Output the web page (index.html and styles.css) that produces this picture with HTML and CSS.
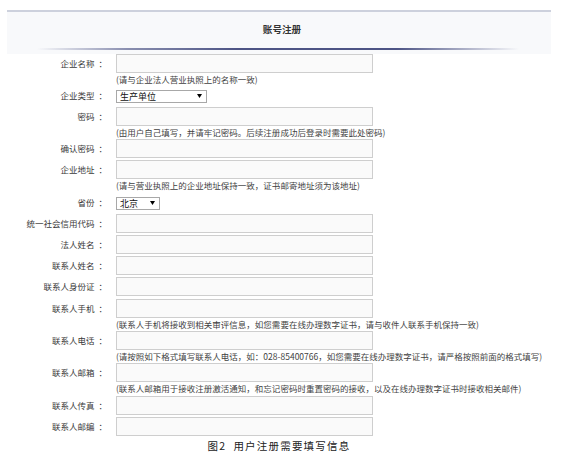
FILE: index.html
```html
<!DOCTYPE html>
<html lang="zh-CN">
<head>
  <meta charset="UTF-8">
  <meta name="viewport" content="width=device-width, initial-scale=1.0">
  <title>账号注册</title>
  <link rel="stylesheet" href="styles.css">
</head>
<body>

  <div class="header">
    <div class="header-title">账号注册</div>
    <div class="header-line"></div>
    <div class="header-foot"></div>
  </div>

  <div class="form">
    <div class="row">
      <div class="label">企业名称<span class="colon">：</span></div>
      <div class="field">
        <div class="input"></div>
        <div class="hint">(请与企业法人营业执照上的名称一致)</div>
      </div>
    </div>
    <div class="row">
      <div class="label">企业类型<span class="colon">：</span></div>
      <div class="field">
        <div class="select wide">
          <span>生产单位</span>
          <svg class="arrow" width="5" height="4" viewBox="0 0 5 4"><path d="M0 0h5L2.5 4z" fill="#000"/></svg>
        </div>
      </div>
    </div>
    <div class="row">
      <div class="label">密码<span class="colon">：</span></div>
      <div class="field">
        <div class="input"></div>
        <div class="hint">(由用户自己填写，并请牢记密码。后续注册成功后登录时需要此处密码)</div>
      </div>
    </div>
    <div class="row">
      <div class="label">确认密码<span class="colon">：</span></div>
      <div class="field"><div class="input"></div></div>
    </div>
    <div class="row">
      <div class="label">企业地址<span class="colon">：</span></div>
      <div class="field">
        <div class="input"></div>
        <div class="hint">(请与营业执照上的企业地址保持一致，证书邮寄地址须为该地址)</div>
      </div>
    </div>
    <div class="row">
      <div class="label">省份<span class="colon">：</span></div>
      <div class="field">
        <div class="select narrow">
          <span>北京</span>
          <svg class="arrow" width="5" height="4" viewBox="0 0 5 4"><path d="M0 0h5L2.5 4z" fill="#000"/></svg>
        </div>
      </div>
    </div>
    <div class="row">
      <div class="label">统一社会信用代码<span class="colon">：</span></div>
      <div class="field"><div class="input"></div></div>
    </div>
    <div class="row">
      <div class="label">法人姓名<span class="colon">：</span></div>
      <div class="field"><div class="input"></div></div>
    </div>
    <div class="row">
      <div class="label">联系人姓名<span class="colon">：</span></div>
      <div class="field"><div class="input"></div></div>
    </div>
    <div class="row">
      <div class="label">联系人身份证<span class="colon">：</span></div>
      <div class="field"><div class="input"></div></div>
    </div>
    <div class="row">
      <div class="label">联系人手机<span class="colon">：</span></div>
      <div class="field">
        <div class="input"></div>
        <div class="hint">(联系人手机将接收到相关审评信息，如您需要在线办理数字证书，请与收件人联系手机保持一致)</div>
      </div>
    </div>
    <div class="row">
      <div class="label">联系人电话<span class="colon">：</span></div>
      <div class="field">
        <div class="input"></div>
        <div class="hint">(请按照如下格式填写联系人电话，如：028-85400766，如您需要在线办理数字证书，请严格按照前面的格式填写)</div>
      </div>
    </div>
    <div class="row">
      <div class="label">联系人邮箱<span class="colon">：</span></div>
      <div class="field">
        <div class="input"></div>
        <div class="hint">(联系人邮箱用于接收注册激活通知，和忘记密码时重置密码的接收，以及在线办理数字证书时接收相关邮件)</div>
      </div>
    </div>
    <div class="row">
      <div class="label">联系人传真<span class="colon">：</span></div>
      <div class="field"><div class="input"></div></div>
    </div>
    <div class="row">
      <div class="label">联系人邮编<span class="colon">：</span></div>
      <div class="field"><div class="input"></div></div>
    </div>
  </div>

  <div class="caption">图2&nbsp;&nbsp;用户注册需要填写信息</div>

</body>
</html>
```

FILE: styles.css
```css
body {
  margin: 0;
  padding-top: 10px;
  background-color: #ffffff;
  font-family: "Noto Sans CJK SC", "Liberation Sans", sans-serif;
  color: #3a3a3a;
}
.header {
  margin-left: 7px;
  width: 544px;
  background-color: #f8f9fb;
  border-top: 2px solid #cdd1dd;
}
.header-title {
  height: 35.5px;
  line-height: 35.5px;
  padding-left: 6px;
  text-align: center;
  font-size: 9.6px;
  font-weight: bold;
  color: #333;
}
.header-line {
  height: 2px;
  background: linear-gradient(to right, rgba(80, 86, 134, 0) 30px, #8a8fb0 120px, #4d5485 230px, #4d5485 390px, rgba(80, 86, 134, 0) 512px);
}
.header-foot {
  height: 4px;
}
.row {
  display: flex;
  align-items: flex-start;
  min-height: 19px;
  margin-bottom: 2.2px;
}
.label {
  width: 107px;
  flex-shrink: 0;
  text-align: right;
  line-height: 19px;
  font-size: 8.5px;
  white-space: nowrap;
}
.colon {
  margin-left: 4px;
}
.field {
  margin-left: 9px;
}
.input {
  box-sizing: border-box;
  width: 257px;
  height: 19px;
  border: 1px solid #cecece;
  background-color: #fafafa;
}
.hint {
  height: 11.1px;
  line-height: 12px;
  font-size: 8.5px;
  white-space: nowrap;
  color: #3f3f3f;
}
.select {
  box-sizing: border-box;
  display: flex;
  align-items: center;
  justify-content: space-between;
  height: 13px;
  margin-top: 4.3px;
  padding: 0 4px 0 3px;
  border: 1px solid #a8a8a8;
  background-color: #ffffff;
  font-size: 9px;
  color: #111;
}
.select.wide {
  width: 91px;
}
.select.narrow {
  width: 44px;
}
.arrow {
  margin-top: -2px;
}
.caption {
  margin-left: 7px;
  width: 544px;
  margin-top: 2px;
  text-align: center;
  font-size: 10.5px;
  letter-spacing: 1.2px;
  color: #222;
}
```
